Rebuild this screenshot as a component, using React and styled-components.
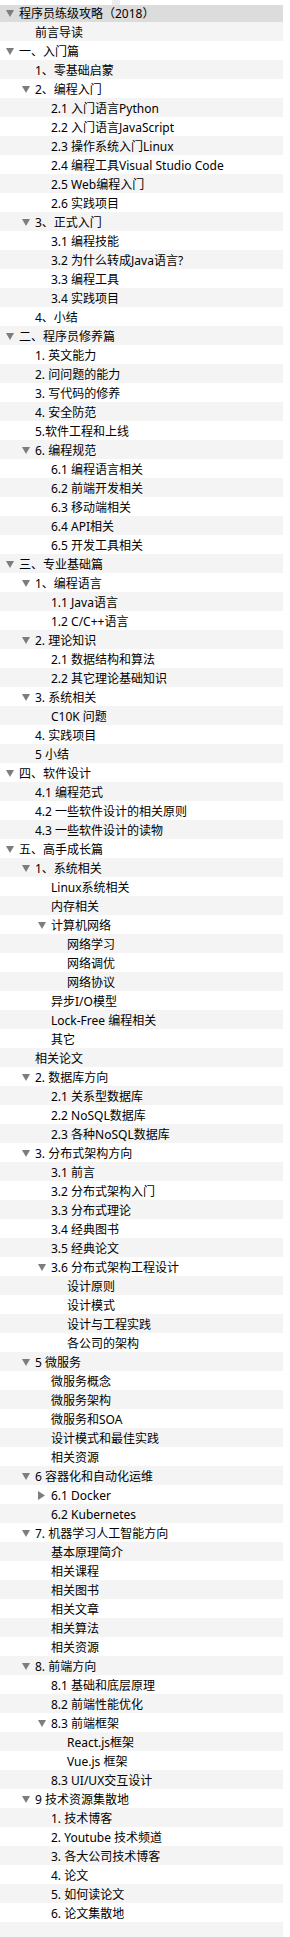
import React from "react";
import styled, { createGlobalStyle } from "styled-components";

const Global = createGlobalStyle`
  html, body { margin: 0; padding: 0; background: #ffffff; }
  body { font-family: "Noto Sans", "Noto Sans CJK SC", sans-serif; }
`;

const Page = styled.div`
  position: relative;
  width: 290px;
  height: 1937px;
  overflow: hidden;
  background: #ffffff;
`;

const TopStrip = styled.div`
  position: absolute;
  left: 0;
  top: 0;
  width: 290px;
  height: 5px;
  background: #ffffff;
  z-index: 2;
`;

const TopTab = styled.div`
  position: absolute;
  left: 112px;
  top: 0;
  width: 8px;
  height: 5px;
  background: #ececec;
  z-index: 3;
`;

const Outline = styled.div`
  width: 283px;
  padding-top: 3px;
  display: flex;
  flex-direction: column;
`;

const Row = styled.div`
  height: 19px;
  display: flex;
  align-items: center;
  padding-left: ${(p) => 6 + p.$level * 16}px;
  background: ${(p) => (p.$selected ? "#dcdcdc" : p.$alt ? "#f4f4f4" : "#ffffff")};
  box-sizing: border-box;
`;

const Toggle = styled.span`
  width: 13px;
  height: 19px;
  flex: none;
  display: flex;
  align-items: center;
  justify-content: flex-start;
  padding-top: 1px;
  box-sizing: border-box;
`;

const Label = styled.span`
  font-family: "Noto Sans", "Noto Sans CJK SC", sans-serif;
  font-size: 12px;
  line-height: 19px;
  color: #000000;
  white-space: nowrap;
  padding-top: 1px;
`;

const Tri = ({ dir }) =>
  dir === "down" ? (
    <svg width="8" height="7" viewBox="0 0 8 7">
      <path d="M0 0 L8 0 L4 7 Z" fill="#7d7d7d" />
    </svg>
  ) : (
    <svg width="7" height="9" viewBox="0 0 7 9">
      <path d="M0 0 L7 4.5 L0 9 Z" fill="#7d7d7d" />
    </svg>
  );

const items = [
  [0, "程序员练级攻略（2018）", "down"],
  [1, "前言导读"],
  [0, "一、入门篇", "down"],
  [1, "1、零基础启蒙"],
  [1, "2、编程入门", "down"],
  [2, "2.1 入门语言Python"],
  [2, "2.2 入门语言JavaScript"],
  [2, "2.3 操作系统入门Linux"],
  [2, "2.4 编程工具Visual Studio Code"],
  [2, "2.5 Web编程入门"],
  [2, "2.6 实践项目"],
  [1, "3、正式入门", "down"],
  [2, "3.1 编程技能"],
  [2, "3.2 为什么转成Java语言?"],
  [2, "3.3 编程工具"],
  [2, "3.4 实践项目"],
  [1, "4、小结"],
  [0, "二、程序员修养篇", "down"],
  [1, "1. 英文能力"],
  [1, "2. 问问题的能力"],
  [1, "3. 写代码的修养"],
  [1, "4. 安全防范"],
  [1, "5.软件工程和上线"],
  [1, "6. 编程规范", "down"],
  [2, "6.1 编程语言相关"],
  [2, "6.2 前端开发相关"],
  [2, "6.3 移动端相关"],
  [2, "6.4 API相关"],
  [2, "6.5 开发工具相关"],
  [0, "三、专业基础篇", "down"],
  [1, "1、编程语言", "down"],
  [2, "1.1 Java语言"],
  [2, "1.2 C/C++语言"],
  [1, "2. 理论知识", "down"],
  [2, "2.1 数据结构和算法"],
  [2, "2.2 其它理论基础知识"],
  [1, "3. 系统相关", "down"],
  [2, "C10K 问题"],
  [1, "4. 实践项目"],
  [1, "5 小结"],
  [0, "四、软件设计", "down"],
  [1, "4.1 编程范式"],
  [1, "4.2 一些软件设计的相关原则"],
  [1, "4.3 一些软件设计的读物"],
  [0, "五、高手成长篇", "down"],
  [1, "1、系统相关", "down"],
  [2, "Linux系统相关"],
  [2, "内存相关"],
  [2, "计算机网络", "down"],
  [3, "网络学习"],
  [3, "网络调优"],
  [3, "网络协议"],
  [2, "异步I/O模型"],
  [2, "Lock-Free 编程相关"],
  [2, "其它"],
  [1, "相关论文"],
  [1, "2. 数据库方向", "down"],
  [2, "2.1 关系型数据库"],
  [2, "2.2 NoSQL数据库"],
  [2, "2.3 各种NoSQL数据库"],
  [1, "3. 分布式架构方向", "down"],
  [2, "3.1 前言"],
  [2, "3.2 分布式架构入门"],
  [2, "3.3 分布式理论"],
  [2, "3.4 经典图书"],
  [2, "3.5 经典论文"],
  [2, "3.6 分布式架构工程设计", "down"],
  [3, "设计原则"],
  [3, "设计模式"],
  [3, "设计与工程实践"],
  [3, "各公司的架构"],
  [1, "5 微服务", "down"],
  [2, "微服务概念"],
  [2, "微服务架构"],
  [2, "微服务和SOA"],
  [2, "设计模式和最佳实践"],
  [2, "相关资源"],
  [1, "6 容器化和自动化运维", "down"],
  [2, "6.1 Docker", "right"],
  [2, "6.2 Kubernetes"],
  [1, "7. 机器学习人工智能方向", "down"],
  [2, "基本原理简介"],
  [2, "相关课程"],
  [2, "相关图书"],
  [2, "相关文章"],
  [2, "相关算法"],
  [2, "相关资源"],
  [1, "8. 前端方向", "down"],
  [2, "8.1 基础和底层原理"],
  [2, "8.2 前端性能优化"],
  [2, "8.3 前端框架", "down"],
  [3, "React.js框架"],
  [3, "Vue.js 框架"],
  [2, "8.3 UI/UX交互设计"],
  [1, "9 技术资源集散地", "down"],
  [2, "1. 技术博客"],
  [2, "2. Youtube 技术频道"],
  [2, "3. 各大公司技术博客"],
  [2, "4. 论文"],
  [2, "5. 如何读论文"],
  [2, "6. 论文集散地"],
];

export default function App() {
  return (
    <>
      <Global />
      <Page>
        <TopStrip />
        <TopTab />
        <Outline>
          {items.map(([level, text, dir], i) => (
            <Row key={i} $level={level} $alt={i % 2 === 1} $selected={i === 0}>
              <Toggle>{dir ? <Tri dir={dir} /> : null}</Toggle>
              <Label>{text}</Label>
            </Row>
          ))}
          <Row $level={0} $alt={true} />
        </Outline>
      </Page>
    </>
  );
}
